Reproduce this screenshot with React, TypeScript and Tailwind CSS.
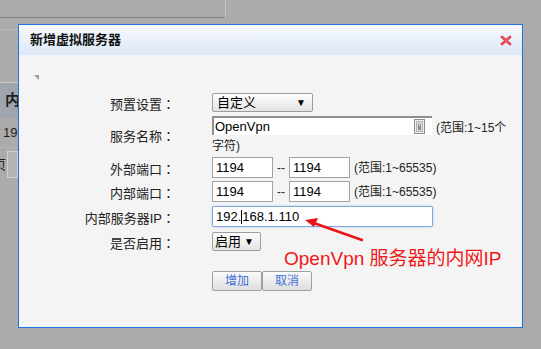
import React from 'react';

const font = { fontFamily: '"Liberation Sans", "Noto Sans CJK SC", sans-serif' };
const tcFont = { fontFamily: '"Noto Sans CJK TC", sans-serif' };

const Label = ({ text, pt = 'pt-[2px]' }: { text: string; pt?: string }) => (
  <div className={`w-[156px] shrink-0 text-right text-[13px] text-[#222] ${pt}`}>
    {text}
    <span style={tcFont}>：</span>
  </div>
);

const TextBox = ({ value, w }: { value: string; w: string }) => (
  <div className={`flex h-[21px] ${w} items-center border border-[#a3a3a3] bg-white pl-[3px] text-[13px] text-black`}>
    {value}
  </div>
);

const Range = ({ text }: { text: string }) => (
  <span className="text-[12px] text-[#222]">{text}</span>
);

const CloseIcon = () => (
  <svg width="12" height="11" viewBox="0 0 12 11">
    <path d="M2 2 L10 9 M10 2 L2 9" stroke="#e0303a" strokeWidth="2.6" strokeLinecap="round" />
    <path d="M2.3 2.2 L9.7 8.8 M9.7 2.2 L2.3 8.8" stroke="#f58a91" strokeWidth="0.8" strokeLinecap="round" />
  </svg>
);

const LockIcon = () => (
  <svg width="11" height="15" viewBox="0 0 11 15">
    <rect x="0.5" y="0.5" width="10" height="14" fill="#f1f1f1" stroke="#8c8c8c" />
    <rect x="2.5" y="2.5" width="6" height="10" fill="#e2e2e2" stroke="#b0b0b0" />
    <rect x="4" y="7" width="3" height="4" fill="#8a8a8a" />
    <path d="M4.5 7 V5.5 A1 1 0 0 1 6.5 5.5 V7" stroke="#8a8a8a" fill="none" />
  </svg>
);

const Button = ({ children }: { children: React.ReactNode }) => (
  <button className="h-[20px] w-[50px] rounded-[2px] border border-[#a0a0a0] bg-gradient-to-b from-[#fbfbfb] to-[#dedede] text-[12px] text-[#3f6fd8]">
    {children}
  </button>
);

export default function App() {
  return (
    <div className="relative h-[349px] w-[541px] overflow-hidden bg-[#ababab]" style={font}>
      {/* page behind the overlay */}
      <div className="flex">
        <div className="w-[226px] border-r border-[#c4c4c4]">
          <div className="h-[18px] border-b border-[#7e7e7e]" />
        </div>
      </div>
      <div className="mt-[5px] w-[18px] overflow-hidden">
        <div className="h-[7px] border-b border-[#b8b8b8]" />
        <div className="h-[52px]" />
        <div className="flex h-[36px] items-center border-t border-[#c9c9c9] bg-[#9ea5ac] pl-[5px] text-[15px] font-bold text-[#222]">
          内
        </div>
        <div className="flex h-[30px] items-center border-b border-[#b4b4b4] pl-[3px] text-[13px] text-[#222]">19</div>
        <div className="mt-[3px] flex items-center gap-[1px]">
          <span className="-ml-[7px] text-[13px] text-[#222]">页</span>
          <div className="h-[27px] w-[14px] border border-[#d0d0d0] bg-[#b3b3b3]" />
        </div>
      </div>

      {/* dialog */}
      <div className="absolute left-[18px] top-[24px] flex h-[304px] w-[505px] flex-col border border-[#1f72e6] bg-[#f4f4f4]">
        <div className="flex h-[30px] shrink-0 items-center justify-between bg-gradient-to-b from-[#f8fafe] to-[#dbe7f7] pl-[11px] pr-[10px]">
          <span className="text-[13px] font-bold text-[#111]">新增虚拟服务器</span>
          <CloseIcon />
        </div>
        <div className="relative flex-1">
          <div className="ml-[15px] mt-[20px] h-0 w-0 border-l-[5px] border-t-[5px] border-l-transparent border-t-[#9a9a9a]" />

          <div className="mt-[13px] flex flex-col">
            <div className="flex h-[23px] items-start">
              <Label text="预置设置" pt="pt-[1px]" />
              <div className="ml-[37px] flex h-[19px] w-[101px] items-center justify-between rounded-[2px] border border-[#9c9c9c] bg-gradient-to-b from-[#fdfdfd] to-[#e4e4e4] pl-[4px] pr-[6px] text-[13px] text-black">
                <span>自定义</span>
                <span className="text-[10px]">▼</span>
              </div>
            </div>

            <div className="flex h-[41px] items-center">
              <Label text="服务名称" pt="pt-0" />
              <div className="ml-[37px] w-[300px] self-start">
                <div className="flex items-start">
                  <div className="flex h-[19px] w-[220px] shrink-0 items-center justify-between border-l-2 border-t-2 border-[#8f8f8f] border-b-0 border-r-0 bg-white pl-[1px] pr-[7px] text-[13px] text-black">
                    <span>OpenVpn</span>
                    <LockIcon />
                  </div>
                  <span className="ml-[4px] mt-[3px] whitespace-nowrap text-[12px] text-[#222]">(范围:1~15个</span>
                </div>
                <div className="mt-[1px] text-[12px] leading-[16px] text-[#222]">字符)</div>
              </div>
            </div>

            <div className="flex h-[24px] items-start">
              <Label text="外部端口" />
              <div className="ml-[37px] flex items-center gap-[4px]">
                <TextBox value="1194" w="w-[61px]" />
                <span className="text-[12px] text-[#222]">--</span>
                <TextBox value="1194" w="w-[61px]" />
                <Range text="(范围:1~65535)" />
              </div>
            </div>

            <div className="flex h-[25px] items-start">
              <Label text="内部端口" />
              <div className="ml-[37px] flex items-center gap-[4px]">
                <TextBox value="1194" w="w-[61px]" />
                <span className="text-[12px] text-[#222]">--</span>
                <TextBox value="1194" w="w-[61px]" />
                <Range text="(范围:1~65535)" />
              </div>
            </div>

            <div className="flex h-[26px] items-start">
              <Label text="内部服务器IP" />
              <div className="ml-[37px] flex h-[21px] w-[221px] items-center rounded-[2px] border border-[#7fa6e0] bg-white pl-[3px] text-[13px] text-black shadow-[0_0_2px_#9dbdf0]">
                <span>192.</span>
                <span className="h-[14px] w-px bg-black" />
                <span>168.1.110</span>
              </div>
            </div>

            <div className="flex h-[39px] items-start">
              <Label text="是否启用" pt="pt-[1px]" />
              <div className="ml-[37px] flex h-[19px] w-[49px] items-center justify-between rounded-[2px] border border-[#9c9c9c] bg-gradient-to-b from-[#fdfdfd] to-[#e4e4e4] pl-[2px] pr-[6px] text-[13px] text-black">
                <span>启用</span>
                <span className="text-[10px]">▼</span>
              </div>
            </div>

            <div className="ml-[193px] flex">
              <Button>增加</Button>
              <Button>取消</Button>
            </div>
          </div>

          {/* annotation */}
          <div className="absolute left-[265px] top-[194px] whitespace-nowrap text-[19px] leading-none text-[#f01818]">
            OpenVpn 服务器的内网IP
          </div>
          <svg className="absolute left-[280px] top-[158px]" width="70" height="30" viewBox="0 0 70 30">
            <path d="M63 27 L12 9" stroke="#e8141a" strokeWidth="2.4" strokeLinecap="round" />
            <path d="M6 7 L19 5 L15 14 Z" fill="#e8141a" />
          </svg>
        </div>
      </div>
    </div>
  );
}
